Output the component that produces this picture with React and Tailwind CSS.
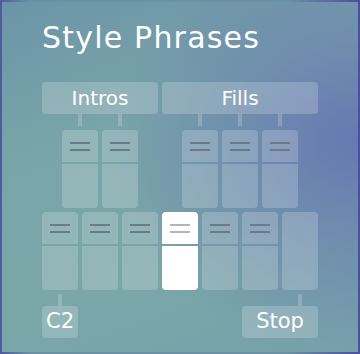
import React from "react";

const Lines = ({ light }) => (
  <div className="flex flex-col items-center gap-[5px] pt-[12px]">
    <div className={`h-[2px] w-[20px] ${light ? "bg-[#b4b4bc]" : "bg-[#6a7a88]"}`} />
    <div className={`h-[2px] w-[20px] ${light ? "bg-[#b4b4bc]" : "bg-[#6a7a88]"}`} />
  </div>
);

const Pad = ({ selected, plain }) => {
  if (plain) {
    return <div className="h-[78px] w-[36px] rounded-[4px] bg-white/20" />;
  }
  const tone = selected ? "bg-white" : "bg-white/20";
  return (
    <div className="flex h-[78px] w-[36px] flex-col gap-[2px]">
      <div className={`h-[32px] rounded-t-[4px] ${tone}`}>
        <Lines light={selected} />
      </div>
      <div className={`flex-1 rounded-b-[4px] ${tone}`} />
    </div>
  );
};

const Stem = () => <div className="mx-auto h-[12px] w-[4px] bg-white/20" />;

export default function App() {
  return (
    <div className="h-[354px] w-[360px] bg-[linear-gradient(90deg,#4e5aa0_0%,#6a90a4_8%,#6a90a4_80%,#4a50a0_100%)] p-[2px]">
      <div
        className="h-full w-full bg-[radial-gradient(ellipse_70%_60%_at_100%_40%,#6778b2_0%,rgba(103,120,178,0)_100%),linear-gradient(160deg,#6c94a8_0%,#79a5a8_35%,#7aa6a8_70%,#76a0aa_100%)] pl-[40px] pt-[16px] text-white"
        style={{ fontFamily: '"DejaVu Sans", sans-serif' }}
      >
        <h1 className="text-[30px] leading-[40px] font-normal tracking-[1.2px]">Style Phrases</h1>

        <div className="mt-[24px] flex gap-[4px]">
          <div className="flex h-[32px] w-[116px] items-center justify-center rounded-[4px] bg-white/20 text-[20px]">
            Intros
          </div>
          <div className="flex h-[32px] w-[156px] items-center justify-center rounded-[4px] bg-white/20 text-[20px]">
            Fills
          </div>
        </div>

        <div className="ml-[20px] grid w-[236px] grid-cols-6 gap-x-[4px]">
          {[0, 1, 2, 3, 4, 5].map((i) => (
            <div key={i} className="w-[36px]">
              {i !== 2 && <Stem />}
            </div>
          ))}
        </div>

        <div className="ml-[20px] mt-[4px] flex gap-[4px]">
          <Pad />
          <Pad />
          <div className="w-[36px]" />
          <Pad />
          <Pad />
          <Pad />
        </div>

        <div className="mt-[4px] flex gap-[4px]">
          <Pad />
          <Pad />
          <Pad />
          <Pad selected />
          <Pad />
          <Pad />
          <Pad plain />
        </div>

        <div className="mt-[4px] flex w-[276px] justify-between">
          <div className="w-[36px]">
            <Stem />
          </div>
          <div className="w-[36px]">
            <Stem />
          </div>
        </div>

        <div className="flex w-[276px] justify-between">
          <div className="flex h-[32px] w-[36px] items-center justify-center rounded-[4px] bg-white/20 text-[21px]">
            C2
          </div>
          <div className="flex h-[32px] w-[76px] items-center justify-center rounded-[4px] bg-white/20 text-[21px]">
            Stop
          </div>
        </div>
      </div>
    </div>
  );
}
